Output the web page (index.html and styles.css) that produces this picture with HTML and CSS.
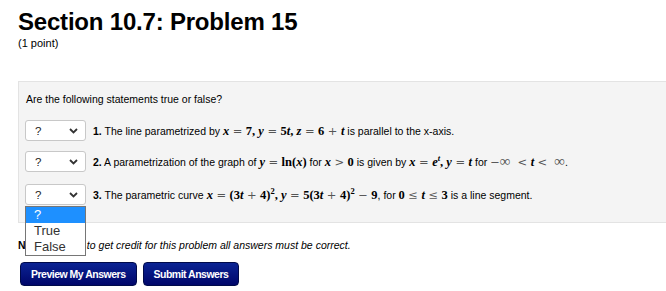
FILE: index.html
```html
<!DOCTYPE html>
<html lang="en">
<head>
    <meta charset="UTF-8">
    <meta name="viewport" content="width=device-width, initial-scale=1.0">
    <title>Section 10.7: Problem 15</title>

    <link rel="stylesheet" href="styles.css">
</head>
<body>
    <div id="page">
        <h1>Section 10.7: Problem 15</h1>
        <p class="points">(1 point)</p>

        <div id="problem">
            <p class="question">Are the following statements true or false?</p>

            <div class="row">
                <div class="select-wrap">
                    <select class="answer">
                        <option>?</option>
                        <option>True</option>
                        <option>False</option>
                    </select>
                    <svg class="chevron" width="9" height="6" viewBox="0 0 9 6"><path d="M1 1 L4.5 4.5 L8 1" fill="none" stroke="#333" stroke-width="1.8"/></svg>
                </div>
                <p class="statement"><b>1.</b> The line parametrized by <span class="m"><i>x</i><span class="op">=</span>7, <i>y</i><span class="op">=</span>5<i>t</i>, <i>z</i><span class="op">=</span>6<span class="op">+</span><i>t</i></span> is parallel to the x-axis.</p>
            </div>

            <div class="row">
                <div class="select-wrap">
                    <select class="answer">
                        <option>?</option>
                        <option>True</option>
                        <option>False</option>
                    </select>
                    <svg class="chevron" width="9" height="6" viewBox="0 0 9 6"><path d="M1 1 L4.5 4.5 L8 1" fill="none" stroke="#333" stroke-width="1.8"/></svg>
                </div>
                <p class="statement"><b>2.</b> A parametrization of the graph of <span class="m"><i>y</i><span class="op">=</span>ln(<i>x</i>)</span> for <span class="m"><i>x</i><span class="op">&gt;</span>0</span> is given by <span class="m"><i>x</i><span class="op">=</span><i>e</i><sup><i>t</i></sup>, <i>y</i><span class="op">=</span><i>t</i></span> for <span class="m"><span class="op first">&minus;<span class="inf">&infin;</span></span><span class="op">&lt;</span><i>t</i><span class="op">&lt;</span><span class="op last"><span class="inf">&infin;</span></span></span>.</p>
            </div>

            <div class="row row-tall">
                <div class="select-wrap">
                    <select class="answer">
                        <option>?</option>
                        <option>True</option>
                        <option>False</option>
                    </select>
                    <svg class="chevron" width="9" height="6" viewBox="0 0 9 6"><path d="M1 1 L4.5 4.5 L8 1" fill="none" stroke="#333" stroke-width="1.8"/></svg>

                    <!-- the open option list of this select -->
                    <ul class="options">
                        <li class="picked">?</li>
                        <li>True</li>
                        <li>False</li>
                    </ul>
                </div>
                <p class="statement"><b>3.</b> The parametric curve <span class="m"><i>x</i><span class="op">=</span>(3<i>t</i><span class="op">+</span>4)<sup>2</sup>, <i>y</i><span class="op">=</span>5(3<i>t</i><span class="op">+</span>4)<sup>2</sup><span class="op">&minus;</span>9</span>, for <span class="m">0<span class="op">&le;</span><i>t</i><span class="op">&le;</span>3</span> is a line segment.</p>
            </div>
        </div>

        <p class="note"><b>Note:</b> In order to get credit for this problem all answers must be correct.</p>

        <div id="buttons">
            <button>Preview My Answers</button>
            <button>Submit Answers</button>
        </div>
    </div>
</body>
</html>
```

FILE: styles.css
```css
* {
    font-family: "Liberation Sans", Arial, Helvetica, sans-serif;
}

body {
    margin: 0;
    overflow: hidden;
    color: #000;
}

#page {
    padding: 0 0 0 18px;
}

h1 {
    margin: 8px 0 0;
    font-size: 24px;
    line-height: 28px;
    letter-spacing: -0.2px;
}

p.points {
    margin: 1px 0 0;
    font-size: 11px;
    line-height: 13px;
}

#problem {
    margin-top: 31px;
    margin-right: -4px;
    padding: 10px 6px 17px;
    background-color: #f4f4f4;
    border: 1px solid #e3e3e3;
}

p {
    margin: 0;
}

p.question {
    font-size: 10.5px;
    line-height: 14px;
    margin-bottom: 14px;
    padding-left: 1px;
}

.row {
    display: flex;
    align-items: center;
    gap: 7px;
    margin-bottom: 10px;
}

.row:last-child {
    margin-bottom: 0;
}

.row-tall {
    margin-top: 12px;
}

.select-wrap {
    position: relative;
    width: 61px;
    height: 21px;
    flex: none;
}

select.answer {
    appearance: none;
    -webkit-appearance: none;
    width: 61px;
    height: 21px;
    margin: 0;
    padding: 0 0 0 9px;
    border: 1px solid #c8c8c8;
    border-radius: 3px;
    background-color: #fff;
    font-size: 11.5px;
    color: #222;
}

.chevron {
    position: absolute;
    right: 8px;
    top: 8px;
    pointer-events: none;
}

p.statement {
    font-size: 10.5px;
    line-height: 14px;
    white-space: nowrap;
}

.m {
    font-family: "Liberation Serif", "Times New Roman", serif;
    font-weight: bold;
    font-size: 12.5px;
}

.m i {
    font-family: "Liberation Serif", "Times New Roman", serif;
}

.m .op {
    font-family: "DejaVu Serif", "Liberation Serif", serif;
    font-weight: normal;
    font-size: 11.5px;
    color: #555;
    margin: 0 3.5px;
}

.m .op.first {
    margin-left: 0;
}

.m .op.last {
    margin-right: 0;
}

.m .inf {
    font-family: "Liberation Serif", "Times New Roman", serif;
    font-size: 15px;
    line-height: 0;
}

sup {
    font-family: "Liberation Serif", "Times New Roman", serif;
    font-size: 8.5px;
    line-height: 0;
    vertical-align: 5px;
}

ul.options {
    position: absolute;
    top: 22px;
    left: 0;
    width: 59px;
    margin: 0;
    padding: 0;
    list-style: none;
    background-color: #fff;
    border: 1px solid #767676;
    z-index: 2;
}

ul.options li {
    height: 16px;
    line-height: 16px;
    padding-left: 8px;
    font-size: 13px;
    color: #333;
}

ul.options li.picked {
    background-color: #1e90ff;
    color: #fff;
}

p.note {
    margin-top: 15px;
    font-size: 10.5px;
    line-height: 14px;
    font-style: italic;
}

p.note b {
    font-style: normal;
}

#buttons {
    display: flex;
    gap: 6px;
    margin-top: 10px;
    padding-left: 2px;
}

button {
    height: 24px;
    padding: 0 10px;
    border: 1px solid #000a4a;
    border-radius: 4px;
    background: linear-gradient(#0b2494, #00066a);
    color: #fff;
    font-weight: bold;
    font-size: 10.5px;
    letter-spacing: -0.5px;
}
```
